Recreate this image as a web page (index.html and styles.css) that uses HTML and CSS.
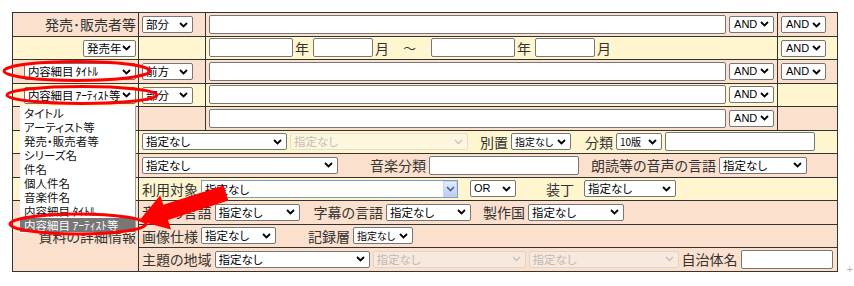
FILE: index.html
```html
<!DOCTYPE html>
<html lang="ja">
<head>
    <meta charset="UTF-8">
    <title>詳細検索</title>
    <link rel="stylesheet" href="styles.css">
</head>
<body>
<div class="page">
    <table class="search">
        <colgroup>
            <col class="col-label">
            <col class="col-mode">
            <col class="col-main">
            <col class="col-op">
        </colgroup>

        <!-- 発売・販売者等 -->
        <tr class="peach">
            <td class="label">発売･販売者等</td>
            <td><select class="w-mode"><option>部分</option></select></td>
            <td><div class="line"><input class="w-text" type="text"><select class="w-and"><option>AND</option></select></div></td>
            <td><select class="w-and"><option>AND</option></select></td>
        </tr>

        <!-- 発売年 -->
        <tr class="yellow">
            <td class="label"><select class="w-year"><option>発売年</option></select></td>
            <td></td>
            <td>
                <div class="line dates">
                    <input class="w-y" type="text"><span class="unit">年</span>
                    <input class="w-m" type="text"><span class="unit">月</span>
                    <span class="tilde">～</span>
                    <input class="w-y" type="text"><span class="unit">年</span>
                    <input class="w-m" type="text"><span class="unit">月</span>
                </div>
            </td>
            <td><select class="w-and"><option>AND</option></select></td>
        </tr>

        <tr class="peach">
            <td class="label"><select class="w-field"><option>内容細目 ﾀｲﾄﾙ</option></select></td>
            <td><select class="w-mode"><option>前方</option></select></td>
            <td><div class="line"><input class="w-text" type="text"><select class="w-and"><option>AND</option></select></div></td>
            <td><select class="w-and"><option>AND</option></select></td>
        </tr>

        <tr class="yellow">
            <td class="label"><select class="w-field"><option>内容細目 ｱｰﾃｨｽﾄ等</option></select></td>
            <td><select class="w-mode"><option>部分</option></select></td>
            <td><div class="line"><input class="w-text" type="text"><select class="w-and"><option>AND</option></select></div></td>
            <td></td>
        </tr>

        <tr class="peach">
            <td class="label"></td>
            <td></td>
            <td><div class="line"><input class="w-text" type="text"><select class="w-and"><option>AND</option></select></div></td>
            <td></td>
        </tr>

        <!-- detail rows -->
        <tr class="yellow">
            <td class="label"></td>
            <td colspan="3">
                <div class="line">
                    <select class="w-145"><option>指定なし</option></select>
                    <select class="w-178" disabled><option>指定なし</option></select>
                    <span class="name ml-9">別置</span>
                    <select class="w-60 small"><option>指定なし</option></select>
                    <span class="name ml-11">分類</span>
                    <select class="w-46 small"><option>10版</option></select>
                    <input class="w-150" type="text">
                </div>
            </td>
        </tr>

        <tr class="peach">
            <td class="label"></td>
            <td colspan="3">
                <div class="line">
                    <select class="w-196"><option>指定なし</option></select>
                    <span class="name ml-29">音楽分類</span>
                    <input class="w-150" type="text">
                    <span class="name ml-9">朗読等の音声の言語</span>
                    <select class="w-88"><option>指定なし</option></select>
                </div>
            </td>
        </tr>

        <tr class="yellow">
            <td class="label"></td>
            <td colspan="3">
                <div class="line">
                    <span class="name">利用対象</span>
                    <span class="old-select">
                        <span class="old-value">指定なし</span>
                        <span class="old-arrow">
                            <svg width="9" height="6" viewBox="0 0 9 6"><path d="M1 1 L4.5 4.5 L8 1" fill="none" stroke="#4d6185" stroke-width="1.6"/></svg>
                        </span>
                    </span>
                    <select class="w-46 ml-9 latin"><option>OR</option></select>
                    <span class="name ml-27">装丁</span>
                    <select class="w-92 ml-7"><option>指定なし</option></select>
                </div>
            </td>
        </tr>

        <tr class="peach">
            <td class="label span-label" rowspan="3">資料の詳細情報</td>
            <td colspan="3">
                <div class="line">
                    <span class="name">音声の言語</span>
                    <select class="w-85"><option>指定なし</option></select>
                    <span class="name ml-11">字幕の言語</span>
                    <select class="w-85"><option>指定なし</option></select>
                    <span class="name ml-9">製作国</span>
                    <select class="w-96"><option>指定なし</option></select>
                </div>
            </td>
        </tr>

        <tr class="peach">
            <td colspan="3">
                <div class="line">
                    <span class="name">画像仕様</span>
                    <select class="w-75"><option>指定なし</option></select>
                    <span class="name ml-29">記録層</span>
                    <select class="w-60 small"><option>指定なし</option></select>
                </div>
            </td>
        </tr>

        <tr class="peach">
            <td colspan="3">
                <div class="line">
                    <span class="name">主題の地域</span>
                    <select class="w-155"><option>指定なし</option></select>
                    <select class="w-153" disabled><option>指定なし</option></select>
                    <select class="w-150" disabled><option>指定なし</option></select>
                    <span class="name">自治体名</span>
                    <input class="w-92" type="text">
                </div>
            </td>
        </tr>
    </table>

    <!-- opened list of the search field select -->
    <ul class="field-list">
        <li>タイトル</li>
        <li>アーティスト等</li>
        <li>発売・販売者等</li>
        <li>シリーズ名</li>
        <li>件名</li>
        <li>個人件名</li>
        <li>音楽件名</li>
        <li>内容細目 ﾀｲﾄﾙ</li>
        <li class="selected">内容細目 ｱｰﾃｨｽﾄ等</li>
    </ul>

    <!-- red marks drawn over the screen -->
    <svg class="marks" width="854" height="286" viewBox="0 0 854 286">
        <ellipse cx="77" cy="71" rx="73" ry="9.5" fill="none" stroke="#f00" stroke-width="3"/>
        <ellipse cx="82" cy="95" rx="75" ry="8.5" fill="none" stroke="#f00" stroke-width="3"/>
        <ellipse cx="78" cy="224" rx="68" ry="10" fill="none" stroke="#f00" stroke-width="3"/>
        <polygon points="139,221 171,229.5 168,220 228.4,200.6 223.6,185.4 163.3,204.8 160.2,195.3" fill="#f00"/>
    </svg>

    <span class="cursor">+</span>
</div>
</body>
</html>
```

FILE: styles.css
```css
/* Reset */
* {
    margin: 0;
    padding: 0;
    box-sizing: border-box;
}

body {
    background: #fff;
    color: #333;
    font-family: "Noto Sans CJK JP", "Noto Sans", sans-serif;
    font-feature-settings: "palt";
}

.page {
    position: relative;
    width: 854px;
    height: 286px;
    padding: 12px 0 0 12px;
}

/* Search table */
.search {
    border-collapse: collapse;
    table-layout: fixed;
    width: 825px;
    font-size: 14px;
}

.col-label { width: 126px; }
.col-mode { width: 67px; }
.col-main { width: 572px; }
.col-op { width: 60px; }

.search td {
    border: 1px solid #333;
    height: 23.5px;
    padding: 0 3px;
    vertical-align: middle;
    white-space: nowrap;
    line-height: 1;
}

.peach td { background: #fbe1cd; }
.yellow td { background: #fff6d0; }

.search td.label {
    text-align: right;
    padding-right: 2px;
}

.span-label {
    padding-top: 4px;
}

.line {
    display: flex;
    align-items: center;
    gap: 3px;
}

/* Form controls */
select,
input {
    font-family: "Noto Sans CJK JP", "Noto Sans", sans-serif;
    font-feature-settings: "palt";
    font-size: 11.5px;
    color: #000;
    background-color: #fff;
    border: 1px solid #767676;
    border-radius: 2px;
    vertical-align: middle;
}

/* own chevron so the text keeps its room */
select {
    -webkit-appearance: none;
    appearance: none;
    height: 17px;
    padding: 0 13px 0 3px;
    line-height: 15px;
    background-image: url("data:image/svg+xml;utf8,<svg xmlns='http://www.w3.org/2000/svg' width='9' height='6' viewBox='0 0 9 6'><path d='M1 1 L4.5 4.5 L8 1' fill='none' stroke='%23000' stroke-width='1.8'/></svg>");
    background-repeat: no-repeat;
    background-position: right 4px center;
    white-space: nowrap;
    overflow: hidden;
}

select:disabled {
    color: #a8a8a8;
    background-color: #f6ede6;
    border-color: #d8cdc5;
    background-image: url("data:image/svg+xml;utf8,<svg xmlns='http://www.w3.org/2000/svg' width='9' height='6' viewBox='0 0 9 6'><path d='M1 1 L4.5 4.5 L8 1' fill='none' stroke='%23b0b0b0' stroke-width='1.3'/></svg>");
}

.yellow select:disabled {
    background-color: #fdf8e8;
    border-color: #dcd6c0;
}

select.small {
    font-size: 10px;
}

input {
    height: 19px;
    padding: 0 2px;
}

.w-mode { width: 51px; }
.w-and,
.latin {
    font-family: "Liberation Sans", Arial, sans-serif;
    font-size: 11px;
}
.w-and { width: 45px; padding-left: 4px; }
.w-year { width: 53px; }
.w-field { width: 112px; font-size: 11.5px; padding-right: 12px; letter-spacing: -0.2px; }
.w-text { width: 519px; }

.w-y { width: 84px; }
.w-m { width: 60px; }

.dates { gap: 2px; }
.unit { font-size: 14px; margin-right: 2px; }
.tilde { font-size: 13px; margin: 0 13px 0 10px; }

.w-46 { width: 46px; }
.w-60 { width: 60px; }
.w-75 { width: 75px; }
.w-85 { width: 85px; }
.w-88 { width: 88px; }
.w-92 { width: 92px; }
.w-96 { width: 96px; }
.w-145 { width: 145px; }
.w-150 { width: 150px; }
.w-153 { width: 153px; }
.w-155 { width: 155px; }
.w-178 { width: 178px; }
.w-196 { width: 196px; }

.name {
    font-size: 14px;
    color: #333;
}

.ml-7 { margin-left: 7px; }
.ml-9 { margin-left: 9px; }
.ml-11 { margin-left: 11px; }
.ml-27 { margin-left: 27px; }
.ml-29 { margin-left: 29px; }

/* old style select of 利用対象 */
.old-select {
    display: inline-flex;
    align-items: stretch;
    width: 257px;
    height: 18px;
    background: #fff;
    border: 1px solid #7f9db9;
    font-size: 11.5px;
    color: #000;
}

.old-value {
    flex: 1;
    padding-left: 3px;
    line-height: 16px;
}

.old-arrow {
    width: 14px;
    display: flex;
    align-items: center;
    justify-content: center;
    background: linear-gradient(#e3ecfd, #b9cdf1);
    border: 1px solid #c3d3fd;
}

/* Opened dropdown list */
.field-list {
    position: absolute;
    left: 20px;
    top: 106px;
    width: 116px;
    list-style: none;
    background: #fff;
    border-right: 1px solid #a0a0a0;
    padding-bottom: 1px;
    font-size: 11.5px;
    color: #111;
}

.field-list li {
    height: 14px;
    line-height: 14px;
    padding-left: 4px;
    white-space: nowrap;
}

.field-list li.selected {
    background: #777;
    color: #fff;
}

/* Red marks */
.marks {
    position: absolute;
    left: 0;
    top: 0;
    pointer-events: none;
}

.cursor {
    position: absolute;
    left: 846px;
    top: 264px;
    font-family: "DejaVu Sans", sans-serif;
    font-size: 9px;
    color: #aaa;
}
```
